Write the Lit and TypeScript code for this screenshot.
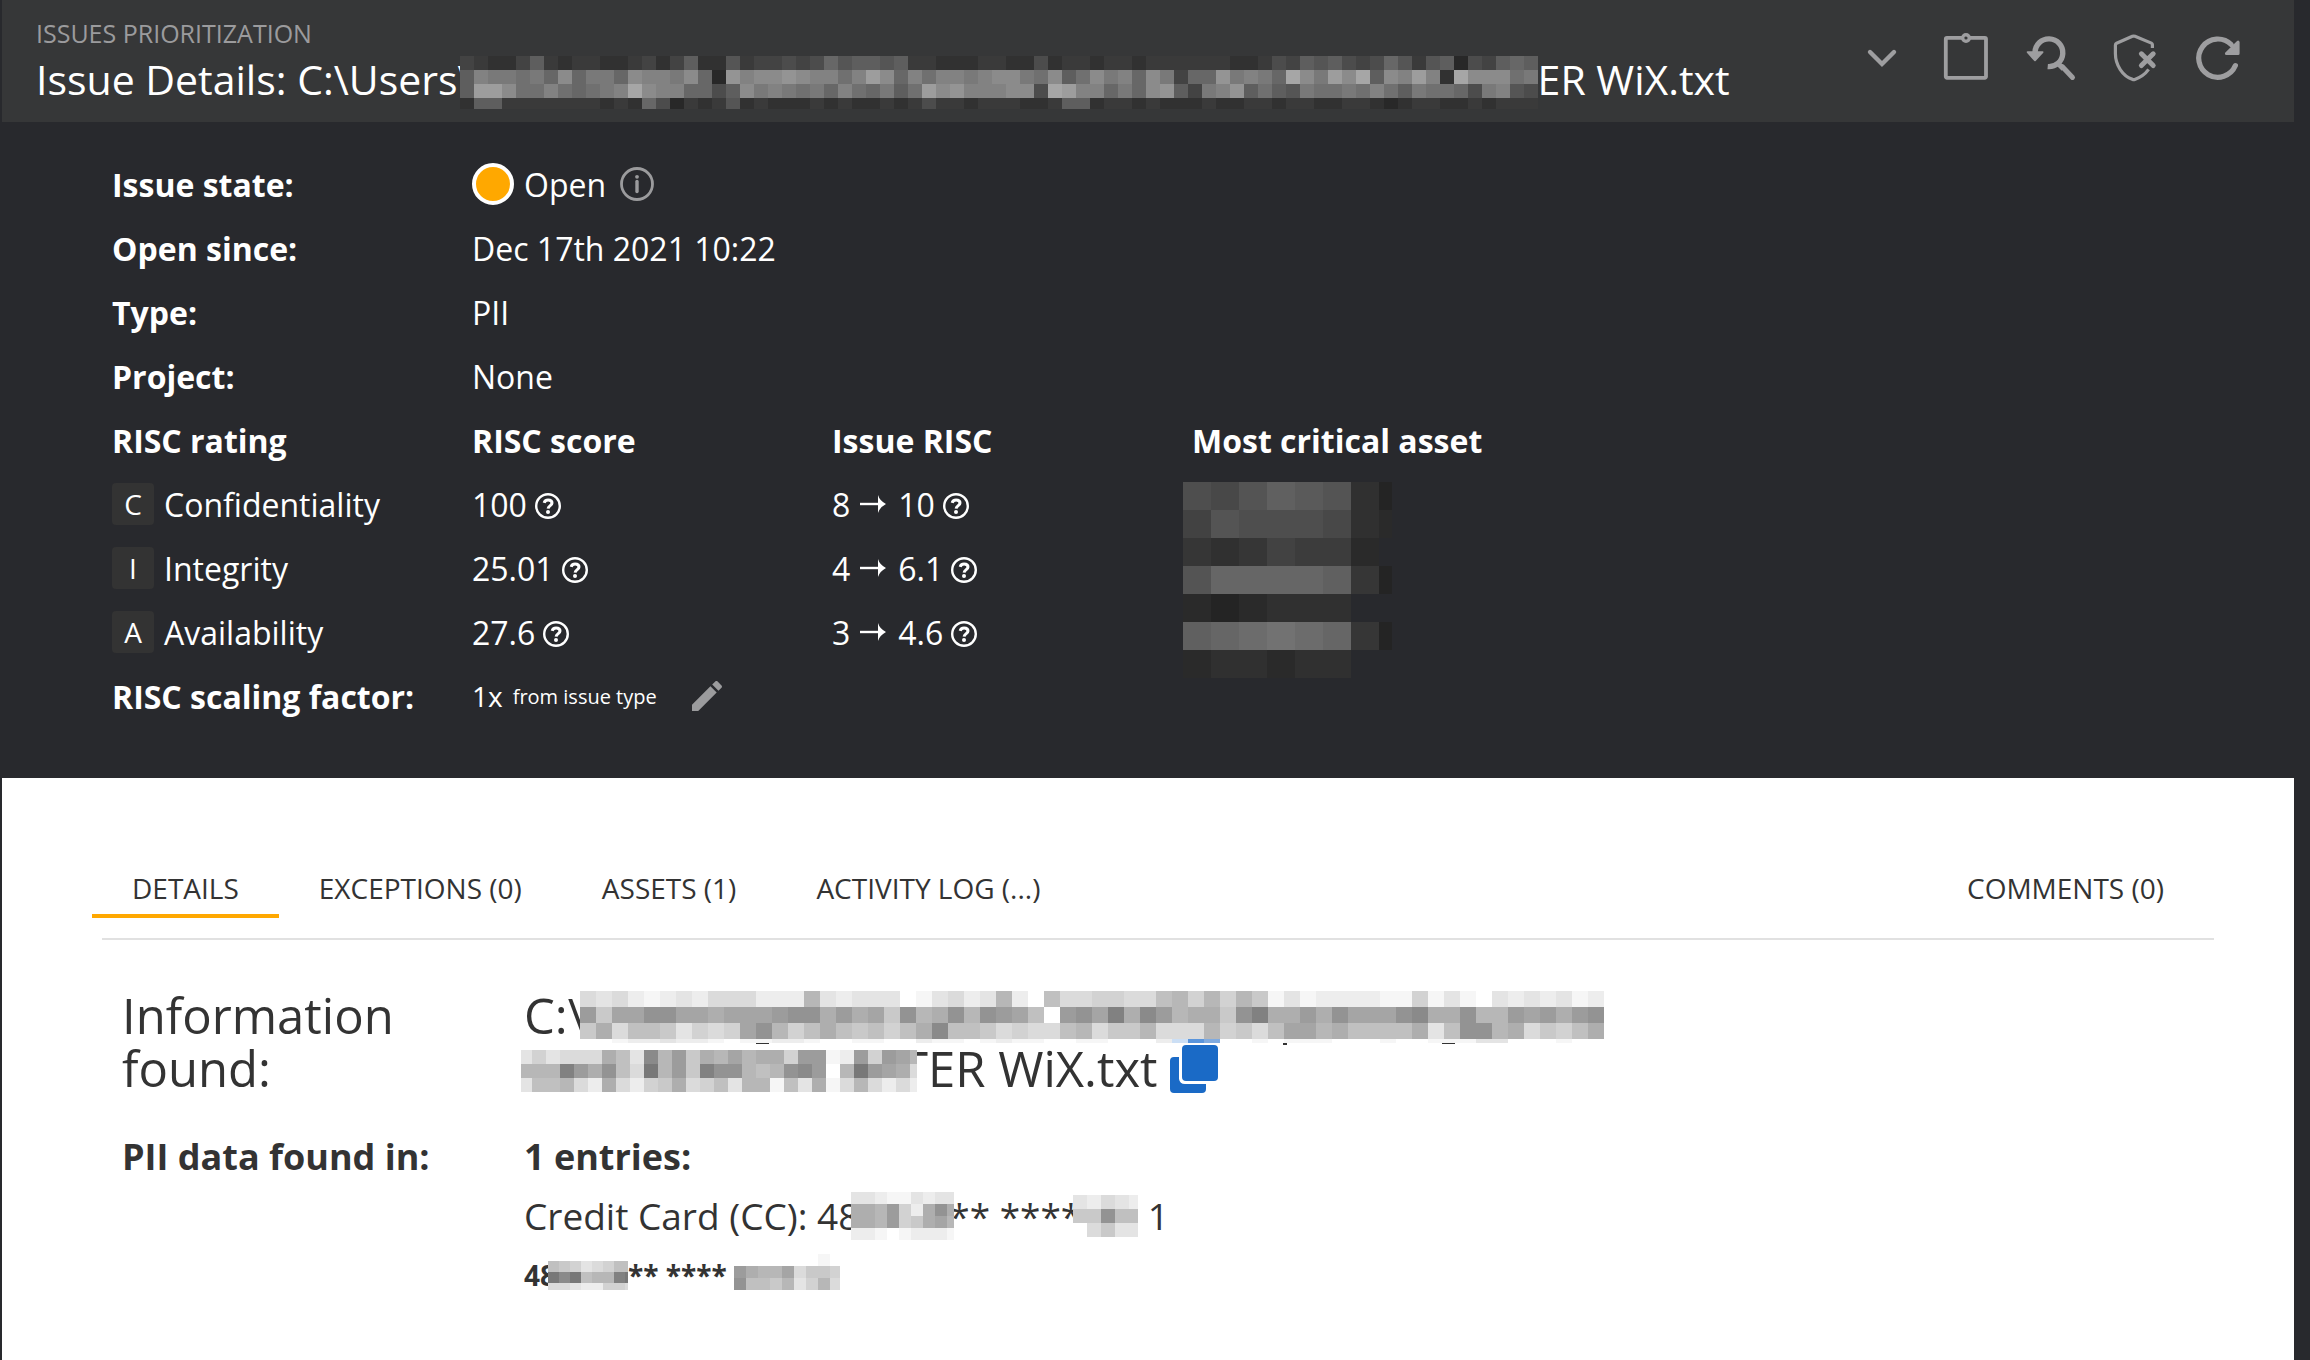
import { LitElement, html, svg, css } from "lit";
import { customElement, state } from "lit/decorators.js";

type Shade = (level: number) => number;

/** Draws a redaction mosaic: one hex digit per cell, "." leaves a cell empty. */
function mosaic(
  rows: string[],
  cell: { w: number; h: number },
  size: { w: number; h: number; x?: number },
  shade: Shade,
  name: string,
  extra: unknown = null
) {
  const cells = rows.flatMap((row, y) =>
    [...row].map((c, x) => {
      if (c === ".") return null;
      const g = shade(parseInt(c, 16));
      return svg`<rect x=${x * cell.w} y=${y * cell.h} width=${cell.w} height=${cell.h} fill="rgb(${g},${g},${g})"></rect>`;
    })
  );
  return html`<svg
    class="mosaic ${name}"
    aria-hidden="true"
    shape-rendering="crispEdges"
    width=${size.w}
    height=${size.h}
    viewBox="${size.x ?? 0} 0 ${size.w} ${size.h}"
  >${cells}${extra}</svg>`;
}

const onHeader: Shade = (n) => 40 + n * 9;
const onDark: Shade = (n) => 36 + n * 6;
const onLight: Shade = (n) => 255 - n * 9;

const TITLE_MOSAIC = [
  "32113621221123136115233434756656221112211412212212222221124365643475256043676",
  "6a99897b7997baa9b70cabbcbaa8adb7a8aa9abb98b68b9a7b9377c9a97eb9dbe6bada1ebbb89",
  "6ddb88a8789aebaa7746b9a9897a87968dbcaaabb4edaa797bc639ac686598898a86988749a54",
  "16622222221217402125121112121121242212221126612212111211221221122101221121222",
];
const PATH_MOSAIC = [
  "4342123244422283233301342382074455447858586131222211513103232312",
  "b6aaccaa9aaabcc9b9a6c89c8cba70bcae9db8996ce99b9caaacd99c88bab9bc",
  "6947763545ac8579767579d776454478466844485647aa897777937cc8946579",
  "0012232210112210011002110121100110002311001011100010011133000100",
];
const FILE_MOSAIC = [
  "353444973d8b698a8995bb12b5ba8",
  "888eb9c74f8b6ecc878cdb08fba94",
  "37784294256945738817391484242",
];
const CARD_MOSAIC = ["332113233", "998b529c9", "998b569a8", "221012221"];
const CARD_END_MOSAIC = ["32432", "66c77", ".4633"];
const SMALL_MOSAIC = ["76534577", "fdf788ef", "44322554"];
const SMALL_END_MOSAIC = ["000000010", "b988a4665", "c77683584"];
const ASSET_MOSAIC = [
  "768a9820",
  "58777621",
  "3235441.",
  "8bbbba30",
  "101222..",
  "abcdcb30",
  "122122..",
];

/* What stays visible along the lower edge of the path strip. */
const pathEdge = svg`<rect x="0" y="52" width="1026" height="2" fill="#fff"/>
  <rect x="592" y="48" width="16" height="4" fill="#ccdff5"/>
  <rect x="608" y="48" width="16" height="4" fill="#5a95dc"/>
  <rect x="624" y="48" width="16" height="4" fill="#80abe0"/>
  <g fill="#333"><rect x="176" y="52" width="13" height="1"/><rect x="703" y="52" width="4" height="2"/><rect x="862" y="52" width="13" height="1"/></g>`;

const chevron = svg`<path d="M12 18 24 30 36 18" fill="none" stroke="currentColor" stroke-width="4.4" stroke-linecap="round"/>`;
const clipboard = svg`<g fill="none" stroke="currentColor">
  <path d="M20.5 3.8H5a1.2 1.2 0 0 0-1.2 1.2V42.6a1.2 1.2 0 0 0 1.2 1.2H42.8a1.2 1.2 0 0 0 1.2-1.2V5a1.2 1.2 0 0 0-1.2-1.2H27.5" stroke-width="3.8"/>
  <circle cx="24" cy="4" r="3.3" stroke-width="3.4"/></g>`;
const searchBack = svg`<path d="M21.7 32.6A13.9 13.9 0 1 0 9 18.7" fill="none" stroke="currentColor" stroke-width="5.4"/>
  <path d="M1.6 18.1H16.6L9 26.4Z" fill="currentColor" stroke="currentColor" stroke-width="1.8" stroke-linejoin="round"/>
  <path d="M36.2 32.6 46.5 43.4" stroke="currentColor" stroke-width="5" stroke-linecap="round"/><path d="M33 30.5 37.5 35" stroke="currentColor" stroke-width="5"/>`;
const shieldX = svg`<path d="M42.4 14V10.6Q42.4 9.6 41.4 9.1L25 2.3Q23.7 1.8 22.4 2.3L6.6 9.3Q5.4 9.9 5.4 11.2V19.5C5.4 31 12.6 42.3 22.6 45.4Q23.7 45.8 24.8 45.4C30.6 43.4 35.6 39.6 38.6 35.4" fill="none" stroke="currentColor" stroke-width="3.2"/>
  <path d="M31.4 19.8 43.2 31.6M43.2 19.8 31.4 31.6" stroke="currentColor" stroke-width="5" stroke-linecap="round"/>`;
const refresh = svg`<path d="M41.4 31.6A19.1 19.1 0 1 1 37.2 10.5" fill="none" stroke="currentColor" stroke-width="5.2" stroke-linecap="round"/>
  <path d="M44.1 8.2V19.5H32.4Z" fill="currentColor" stroke="currentColor" stroke-width="3" stroke-linejoin="round"/>`;

const ACTIONS = [
  { label: "Show more", icon: chevron },
  { label: "Clipboard", icon: clipboard },
  { label: "Scan again", icon: searchBack },
  { label: "Add exception", icon: shieldX },
  { label: "Refresh", icon: refresh },
];

const help = html`<button class="bare help" aria-label="Help">
  <svg width="26" height="26" viewBox="0 0 26 26" fill="none" stroke="currentColor">
    <circle cx="13" cy="13" r="11.8" stroke-width="2.4" />
    <path d="M9.2 9.9C9.6 8 11 7.1 13.1 7.1 15.5 7.1 17 8.3 17 10.1 17 12.6 13.4 12.6 13.1 15.6" stroke-width="3" />
    <circle cx="13" cy="19" r="2" fill="currentColor" stroke="none" />
  </svg>
</button>`;

const arrow = html`<svg class="arrow" role="img" aria-label="to" width="26" height="18" viewBox="0 0 26 18">
  <path d="M0 9H20" stroke="currentColor" stroke-width="2.4" />
  <path d="M18 0Q19.5 5.5 26 9 19.5 12.5 18 18Z" fill="currentColor" />
</svg>`;

const RATINGS = [
  { key: "C", name: "Confidentiality", score: "100", from: "8", to: "10" },
  { key: "I", name: "Integrity", score: "25.01", from: "4", to: "6.1" },
  { key: "A", name: "Availability", score: "27.6", from: "3", to: "4.6" },
];

const TABS = ["DETAILS", "EXCEPTIONS (0)", "ASSETS (1)", "ACTIVITY LOG (...)", "COMMENTS (0)"];

@customElement("app-root")
export class AppRoot extends LitElement {
  @state() private tab = 0;

  static styles = css`
    :host {
      display: flex;
      flex-direction: column;
      min-height: 100vh;
      box-sizing: border-box;
      padding: 0 16px 0 2px;
      background: #28292d;
      color: #fff;
      font-family: "Open Sans", "Noto Sans", sans-serif;
      font-size: 32px;
    }
    h1, h2, h3, dl, dd, dt, p { margin: 0; font-size: inherit; font-weight: 400; }
    button {
      padding: 0;
      border: 0;
      background: none;
      color: inherit;
      font: inherit;
      cursor: pointer;
    }
    svg { display: block; flex: none; overflow: visible; }
    .mosaic { position: relative; z-index: 1; overflow: hidden; }
    .bare { display: flex; flex: none; }

    .top {
      display: flex;
      justify-content: space-between;
      align-items: flex-start;
      padding: 15px 52px 14px 34px;
      background: #363738;
    }
    .crumb { font-size: 25px; line-height: 36px; color: #9b9b9d; }
    .title {
      display: flex;
      align-items: center;
      height: 57px;
      font-size: 41px;
      line-height: 57px;
      white-space: pre;
    }
    .title-strip { margin: 6px 0 0 -13px; }
    .actions { display: flex; gap: 36px; padding-top: 19px; color: #9e9ea0; }

    .summary { padding: 30px 110px 50px; }
    .row { display: grid; grid-template-columns: 360px 1fr; align-items: center; height: 64px; }
    .row dt, th { font-weight: 700; text-align: left; }
    .value { display: flex; align-items: center; gap: 10px; }
    .rated { gap: 8px; }
    .arrow { margin: 0 4px 0 2px; }
    .help { margin-top: 4px; }
    .dot {
      box-sizing: border-box;
      width: 42px;
      height: 42px;
      border: 4px solid #fff;
      border-radius: 50%;
      background: #ffa800;
    }
    .muted { margin-left: 4px; color: #9b9b9d; }
    .factor { font-size: 28px; }
    .origin { font-size: 20px; }
    .edit { margin-left: 25px; color: #9b9b9d; }

    table { border-collapse: collapse; table-layout: fixed; width: 1440px; }
    th, td { height: 64px; padding: 0; vertical-align: middle; }
    .asset { position: relative; }
    .asset-strip { position: absolute; top: 10px; left: -9px; }
    .badge {
      display: grid;
      place-items: center;
      width: 42px;
      height: 42px;
      border-radius: 4px;
      background: #333;
      font-size: 28px;
      line-height: 42px;
    }

    .panel { flex: 1; padding: 75px 80px 60px 90px; background: #fff; color: #333; }
    .tabs { display: flex; font-size: 28px; line-height: 38px; }
    .tab { padding: 16px 40px 7px; border-bottom: 4px solid transparent; white-space: nowrap; }
    .tab[aria-selected="true"] { border-bottom-color: #ffa800; }
    .tab:last-child { margin-left: auto; margin-right: 10px; }
    .rule { margin: 20px 0 0 10px; border: 0; border-top: 2px solid #e1e1e1; }

    .facts {
      display: grid;
      grid-template-columns: 402px 1fr;
      padding: 49px 30px 0;
      font-size: 36px;
      line-height: 50px;
    }
    .found { font-size: 49px; line-height: 53px; }
    .found-label { max-width: 340px; }
    .line { display: flex; align-items: center; height: 53px; white-space: pre; }
    .path-strip { margin: 4px 0 0 -6px; }
    .file-strip { margin: 4px 0 0 -3px; }
    .file-end { margin-left: -16px; }
    .copy { margin-left: 12px; color: #1a6ac6; }
    .strong { font-weight: 700; }
    .gap { margin-top: 37px; }
    .card { display: flex; align-items: center; height: 68px; font-size: 37px; white-space: pre; }
    .card-strip { margin: 0 -5px 0 -8px; }
    .card-end { margin-left: -8px; }
    .small { display: flex; align-items: center; height: 50px; font-size: 28px; font-weight: 700; white-space: pre; }
    .small-strip { margin-left: -8px; }
    .small-end { margin-bottom: 6px; }
  `;

  render() {
    return html`
      <header class="top">
        <div>
          <p class="crumb">ISSUES PRIORITIZATION</p>
          <h1 class="title">Issue Details: C:\\Users\\${mosaic(TITLE_MOSAIC, { w: 14, h: 14 }, { w: 1078, h: 53 }, onHeader, "title-strip")}ER WiX.txt</h1>
        </div>
        <div class="actions">
          ${ACTIONS.map(
            (a) => html`<button class="bare" aria-label=${a.label}>
              <svg width="48" height="48" viewBox="0 0 48 48">${a.icon}</svg>
            </button>`
          )}
        </div>
      </header>

      <section class="summary">
        <dl>
          <div class="row">
            <dt>Issue state:</dt>
            <dd class="value">
              <span class="dot"></span>Open
              <button class="bare muted" aria-label="State information">
                <svg width="34" height="34" viewBox="0 0 34 34" fill="none" stroke="currentColor">
                  <circle cx="17" cy="17" r="15.5" stroke-width="2.8" />
                  <path d="M17 14.5V24.5" stroke-width="3.4" stroke-linecap="round" />
                  <circle cx="17" cy="9.8" r="1.9" fill="currentColor" stroke="none" />
                </svg>
              </button>
            </dd>
          </div>
          <div class="row"><dt>Open since:</dt><dd>Dec 17th 2021 10:22</dd></div>
          <div class="row"><dt>Type:</dt><dd>PII</dd></div>
          <div class="row"><dt>Project:</dt><dd>None</dd></div>
        </dl>
        <table>
          <thead>
            <tr><th>RISC rating</th><th>RISC score</th><th>Issue RISC</th><th>Most critical asset</th></tr>
          </thead>
          <tbody>
            ${RATINGS.map(
              (r, i) => html`<tr>
                <td><div class="value"><span class="badge">${r.key}</span>${r.name}</div></td>
                <td><div class="value rated">${r.score}${help}</div></td>
                <td><div class="value rated"><span>${r.from}</span>${arrow}<span>${r.to}</span>${help}</div></td>
                ${i === 0
                  ? html`<td class="asset" rowspan="3">
                      ${mosaic(ASSET_MOSAIC, { w: 28, h: 28 }, { w: 209, h: 196 }, onDark, "asset-strip")}
                    </td>`
                  : null}
              </tr>`
            )}
          </tbody>
        </table>
        <dl>
          <div class="row">
            <dt>RISC scaling factor:</dt>
            <dd class="value">
              <span class="factor">1x</span><span class="origin">from issue type</span>
              <button class="bare edit" aria-label="Edit scaling factor">
                <svg width="30" height="30" viewBox="3 3 18 18" fill="currentColor">
                  <path d="M3 17.25V21h3.75L17.81 9.94l-3.75-3.75L3 17.25zM20.71 7.04c.39-.39.39-1.02 0-1.41l-2.34-2.34c-.39-.39-1.02-.39-1.41 0l-1.83 1.83 3.75 3.75 1.83-1.83z" />
                </svg>
              </button>
            </dd>
          </div>
        </dl>
      </section>

      <main class="panel">
        <div class="tabs" role="tablist">
          ${TABS.map(
            (t, i) => html`<button
              class="tab"
              role="tab"
              aria-selected=${this.tab === i ? "true" : "false"}
              @click=${() => (this.tab = i)}
            >${t}</button>`
          )}
        </div>
        <hr class="rule" />
        <div class="facts">
          <h2 class="found found-label">Information found:</h2>
          <div class="found">
            <div class="line">C:\\${mosaic(PATH_MOSAIC, { w: 16, h: 16 }, { w: 1026, h: 54 }, onLight, "path-strip", pathEdge)}</div>
            <div class="line">${mosaic(FILE_MOSAIC, { w: 14, h: 14 }, { w: 396, h: 42, x: 3 }, onLight, "file-strip")}<span class="file-end">TER WiX.txt</span><button class="bare copy" aria-label="Copy path">
                <svg width="48" height="48" viewBox="0 0 48 48" fill="currentColor">
                  <path d="M4 12H9V34A6 6 0 0 0 15 39H36V44A4 4 0 0 1 32 48H4A4 4 0 0 1 0 44V16A4 4 0 0 1 4 12Z" />
                  <rect x="12" y="0" width="36" height="36" rx="4" />
                </svg></button></div>
          </div>
          <h3 class="strong gap">PII data found in:</h3>
          <div class="gap">
            <p class="strong">1 entries:</p>
            <p class="card">Credit Card (CC): 48${mosaic(CARD_MOSAIC, { w: 12, h: 12 }, { w: 103, h: 48 }, onLight, "card-strip")}** ****${mosaic(CARD_END_MOSAIC, { w: 14, h: 14 }, { w: 65, h: 42 }, onLight, "card-end")} 1</p>
            <p class="small">48${mosaic(SMALL_MOSAIC, { w: 11, h: 11 }, { w: 80, h: 29 }, onLight, "small-strip")}** **** ${mosaic(SMALL_END_MOSAIC, { w: 12, h: 12 }, { w: 106, h: 36 }, onLight, "small-end")}</p>
          </div>
        </div>
      </main>
    `;
  }
}
